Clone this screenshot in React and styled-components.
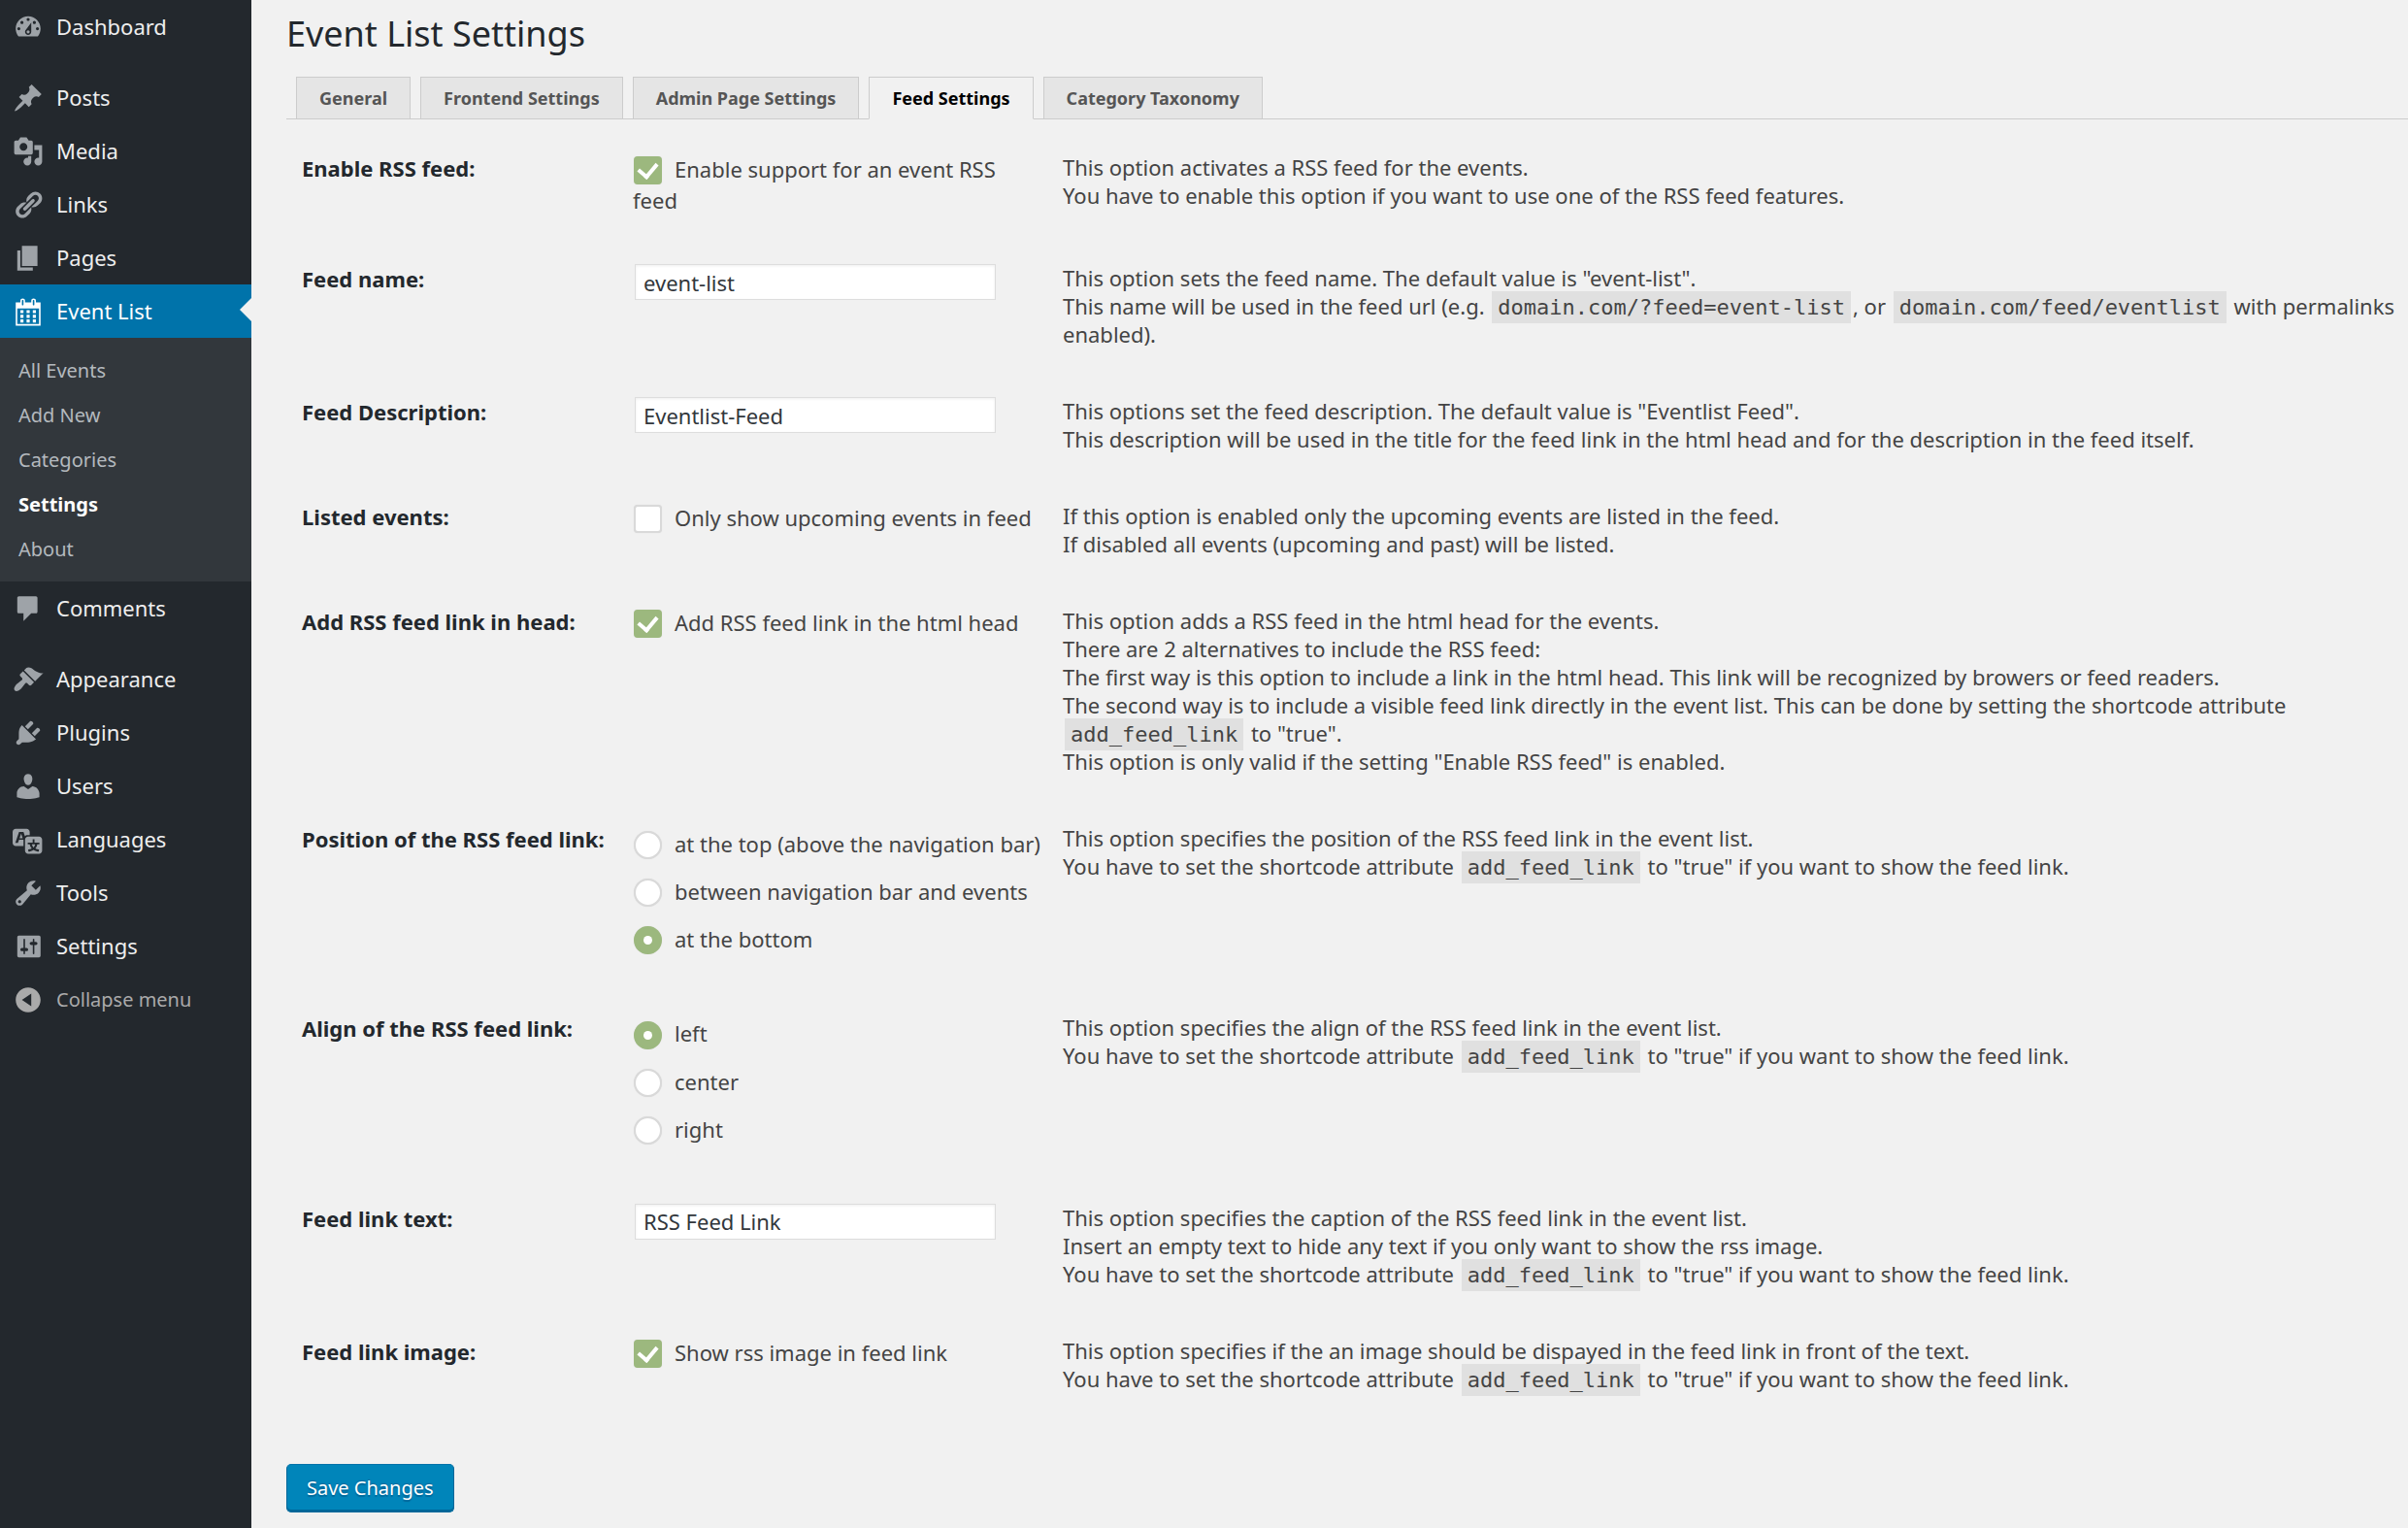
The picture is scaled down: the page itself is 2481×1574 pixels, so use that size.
import React, { useState } from 'react';
import styled, { createGlobalStyle, css } from 'styled-components';

const ICONS = {
  dashboard:
    'M3.76 16h12.48c1.1-1.37 1.76-3.11 1.76-5 0-4.42-3.58-8-8-8s-8 3.58-8 8c0 1.89.66 3.63 1.76 5zM10 4c.55 0 1 .45 1 1s-.45 1-1 1-1-.45-1-1 .45-1 1-1zM6 6c.55 0 1 .45 1 1s-.45 1-1 1-1-.45-1-1 .45-1 1-1zm8 0c.55 0 1 .45 1 1s-.45 1-1 1-1-.45-1-1 .45-1 1-1zm-5.37 5.55L12 7v6c0 1.1-.9 2-2 2s-2-.9-2-2c0-.57.24-1.08.63-1.45zM4 10c.55 0 1 .45 1 1s-.45 1-1 1-1-.45-1-1 .45-1 1-1zm12 0c.55 0 1 .45 1 1s-.45 1-1 1-1-.45-1-1 .45-1 1-1zm-5 3c0-.55-.45-1-1-1s-1 .45-1 1 .45 1 1 1 1-.45 1-1z',
  posts:
    'M10.44 3.02l1.82-1.82 6.36 6.35-1.83 1.82c-1.05-.68-2.48-.57-3.41.36l-.75.75c-.92.93-1.04 2.35-.35 3.41l-1.83 1.82-2.41-2.41-2.8 2.79c-.42.42-3.38 2.71-3.8 2.29s1.86-3.39 2.28-3.81l2.79-2.79L4.1 9.36l1.83-1.82c1.05.69 2.48.57 3.4-.36l.75-.75c.93-.92 1.05-2.35.36-3.41z',
  media:
    'M13 11V4c0-.55-.45-1-1-1h-1.67L9 1H5L3.67 3H2c-.55 0-1 .45-1 1v7c0 .55.45 1 1 1h10c.55 0 1-.45 1-1zM7 4.5c1.38 0 2.5 1.12 2.5 2.5S8.38 9.5 7 9.5 4.5 8.38 4.5 7 5.62 4.5 7 4.5zM14 6h5v10.5c0 1.38-1.12 2.5-2.5 2.5S14 17.88 14 16.5s1.12-2.5 2.5-2.5c.17 0 .34.02.5.05V9h-3V6zm-4 8.05V13h2v3.5c0 1.38-1.12 2.5-2.5 2.5S7 17.88 7 16.5 8.12 14 9.5 14c.17 0 .34.02.5.05z',
  links:
    'M17.74 2.76c1.68 1.69 1.68 4.41 0 6.1l-1.53 1.52c-1.12 1.12-2.7 1.47-4.14 1.09l2.62-2.61.76-.77.76-.76c.84-.84.84-2.2 0-3.04-.84-.85-2.2-.85-3.04 0l-.77.76-3.38 3.38c-.37-1.44-.02-3.02 1.1-4.14l1.52-1.53c1.69-1.68 4.42-1.68 6.1 0zM8.59 13.43l5.34-5.34c.42-.42.42-1.1 0-1.52-.44-.43-1.13-.39-1.53 0l-5.33 5.34c-.42.42-.42 1.1 0 1.52.44.43 1.13.39 1.52 0zm-.76 2.29l4.14-4.15c.38 1.44.03 3.02-1.09 4.14l-1.52 1.53c-1.69 1.68-4.41 1.68-6.1 0-1.68-1.68-1.68-4.42 0-6.1l1.53-1.52c1.12-1.12 2.7-1.47 4.14-1.1l-4.14 4.15c-.85.84-.85 2.2 0 3.05.84.84 2.2.84 3.04 0z',
  pages: 'M6 15V2h10v13H6zm-1 1h8v2H3V5h2v11z',
  calendar:
    'M15 4h3v15H2V4h3V3c0-.41.15-.76.44-1.06.29-.29.65-.44 1.06-.44s.77.15 1.06.44c.29.3.44.65.44 1.06v1h4V3c0-.41.15-.76.44-1.06.29-.29.65-.44 1.06-.44s.77.15 1.06.44c.29.3.44.65.44 1.06v1zM6 3v2.5c0 .14.05.26.15.36.09.09.21.14.35.14s.26-.05.35-.14c.1-.1.15-.22.15-.36V3c0-.14-.05-.26-.15-.35-.09-.1-.21-.15-.35-.15s-.26.05-.35.15c-.1.09-.15.21-.15.35zm7 0v2.5c0 .14.05.26.14.36.1.09.22.14.36.14s.26-.05.36-.14c.09-.1.14-.22.14-.36V3c0-.14-.05-.26-.14-.35-.1-.1-.22-.15-.36-.15s-.26.05-.36.15c-.09.09-.14.21-.14.35zm4 15V8H3v10h14zM7 9v2H5V9h2zm2 0h2v2H9V9zm4 2V9h2v2h-2zm-6 1v2H5v-2h2zm2 0h2v2H9v-2zm4 2v-2h2v2h-2zm-6 1v2H5v-2h2zm4 2H9v-2h2v2zm4 0h-2v-2h2v2z',
  comments:
    'M4 2h11c.55 0 1 .45 1 1v9c0 .55-.45 1-1 1h-3l-5 5v-5H4c-.55 0-1-.45-1-1V3c0-.55.45-1 1-1z',
  appearance:
    'M14.48 11.06L7.41 3.99l1.5-1.5c.5-.56 2.3-.47 3.51.32 1.21.8 1.43 1.28 2.91 2.1 1.18.64 2.45 1.26 4.45.85zm-.71.71L6.7 4.7 4.93 6.47c-.39.39-.39 1.02 0 1.41l1.06 1.06c.39.39.39 1.03 0 1.42-.6.6-1.43 1.11-2.21 1.69-.35.26-.7.53-1.01.84C1.43 14.23.4 16.08 1.4 17.07c.99 1 2.84-.03 4.18-1.36.31-.31.58-.66.85-1.02.57-.78 1.08-1.61 1.69-2.21.39-.39 1.02-.39 1.41 0l1.06 1.06c.39.39 1.02.39 1.41 0z',
  plugins:
    'M13.11 4.36L9.87 7.6 8 5.73l3.24-3.24c.35-.34 1.05-.2 1.56.32.52.51.66 1.21.31 1.55zm-8 1.77l.91-1.12 9.01 9.01-1.19.84c-.71.71-2.63 1.16-3.82 1.16H6.14L4.9 17.26c-.59.59-1.54.59-2.12 0-.59-.58-.59-1.53 0-2.12l1.24-1.24v-3.88c0-1.13.4-3.19 1.09-3.89zm7.26 3.97l3.24-3.24c.34-.35 1.04-.21 1.55.31.52.51.66 1.21.31 1.55l-3.24 3.25z',
  users:
    'M10 9.25c-2.27 0-2.73-3.44-2.73-3.44C7 4.02 7.82 2 9.97 2c2.16 0 2.98 2.02 2.71 3.81 0 0-.41 3.44-2.68 3.44zm0 2.57L12.72 10c2.39 0 4.52 2.33 4.52 4.53v2.49s-3.65 1.13-7.24 1.13c-3.65 0-7.24-1.13-7.24-1.13v-2.49c0-2.25 1.94-4.48 4.47-4.48z',
  languages:
    'M11 7H9.49c-.63 0-1.25.3-1.59.7L7 5H4.13l-2.39 7h1.69l.74-2H7v4H2c-1.1 0-2-.9-2-2V5c0-1.1.9-2 2-2h7c1.1 0 2 .9 2 2v2zM6.51 9H4.49l1-2.93zM10 8h7c1.1 0 2 .9 2 2v7c0 1.1-.9 2-2 2h-7c-1.1 0-2-.9-2-2v-7c0-1.1.9-2 2-2zm7.25 5v-1.08h-3.17V9.75h-1.16v2.17H9.75V13h1.28c.11.85.56 1.85 1.28 2.62-.87.36-1.89.62-2.31.62-.01.02.22.97.2 1.46.84 0 2.21-.5 3.28-1.15 1.09.65 2.48 1.15 3.34 1.15-.02-.49.2-1.44.2-1.46-.43 0-1.49-.27-2.38-.63.7-.77 1.14-1.77 1.25-2.61h1.36zm-3.81 1.93c-.5-.46-.85-1.13-1.01-1.93h2.09c-.17.8-.51 1.47-1 1.93l-.04.03s-.03-.02-.04-.03z',
  tools:
    'M16.68 9.77c-1.34 1.34-3.3 1.67-4.95.99l-5.41 6.52c-.99.99-2.59.99-3.58 0s-.99-2.59 0-3.57l6.52-5.42c-.68-1.65-.35-3.61.99-4.95 1.28-1.28 3.12-1.62 4.72-1.06l-2.89 2.89 2.82 2.82 2.86-2.87c.53 1.58.18 3.39-1.08 4.65zM3.81 16.21c.4.39 1.04.39 1.43 0 .4-.4.4-1.04 0-1.43-.39-.4-1.03-.4-1.43 0-.39.39-.39 1.03 0 1.43z',
  settings:
    'M18 16V4c0-.55-.45-1-1-1H4c-.55 0-1 .45-1 1v12c0 .55.45 1 1 1h13c.55 0 1-.45 1-1zM8 11h1c.55 0 1 .45 1 1s-.45 1-1 1H8v1.5c0 .28-.22.5-.5.5s-.5-.22-.5-.5V13H6c-.55 0-1-.45-1-1s.45-1 1-1h1V5.5c0-.28.22-.5.5-.5s.5.22.5.5V11zm5-2h-1c-.55 0-1-.45-1-1s.45-1 1-1h1V5.5c0-.28.22-.5.5-.5s.5.22.5.5V7h1c.55 0 1 .45 1 1s-.45 1-1 1h-1v5.5c0 .28-.22.5-.5.5s-.5-.22-.5-.5V9z',
  collapse:
    'M10 2c4.42 0 8 3.58 8 8s-3.58 8-8 8-8-3.58-8-8 3.58-8 8-8zm2 12V6l-6 4z',
};

const MENU = [
  { icon: 'dashboard', text: 'Dashboard' },
  { separator: true },
  { icon: 'posts', text: 'Posts' },
  { icon: 'media', text: 'Media' },
  { icon: 'links', text: 'Links' },
  { icon: 'pages', text: 'Pages' },
  {
    icon: 'calendar',
    text: 'Event List',
    current: true,
    submenu: ['All Events', 'Add New', 'Categories', 'Settings', 'About'],
  },
  { icon: 'comments', text: 'Comments' },
  { separator: true },
  { icon: 'appearance', text: 'Appearance' },
  { icon: 'plugins', text: 'Plugins' },
  { icon: 'users', text: 'Users' },
  { icon: 'languages', text: 'Languages' },
  { icon: 'tools', text: 'Tools' },
  { icon: 'settings', text: 'Settings' },
];

const TABS = [
  'General',
  'Frontend Settings',
  'Admin Page Settings',
  'Feed Settings',
  'Category Taxonomy',
];

const shortcodeHint = (
  <>
    You have to set the shortcode attribute <Code>add_feed_link</Code> to
    "true" if you want to show the feed link.
  </>
);

const OPTIONS = [
  {
    id: 'enable_feed',
    label: 'Enable RSS feed:',
    type: 'checkbox',
    caption: 'Enable support for an event RSS feed',
    value: true,
    lines: [
      'This option activates a RSS feed for the events.',
      'You have to enable this option if you want to use one of the RSS feed features.',
    ],
  },
  {
    id: 'feed_name',
    label: 'Feed name:',
    type: 'text',
    value: 'event-list',
    lines: [
      'This option sets the feed name. The default value is "event-list".',
      <>
        This name will be used in the feed url (e.g.{' '}
        <Code>domain.com/?feed=event-list</Code>, or{' '}
        <Code>domain.com/feed/eventlist</Code> with permalinks enabled).
      </>,
    ],
  },
  {
    id: 'feed_description',
    label: 'Feed Description:',
    type: 'text',
    value: 'Eventlist-Feed',
    lines: [
      'This options set the feed description. The default value is "Eventlist Feed".',
      'This description will be used in the title for the feed link in the html head and for the description in the feed itself.',
    ],
  },
  {
    id: 'feed_upcoming_only',
    label: 'Listed events:',
    type: 'checkbox',
    caption: 'Only show upcoming events in feed',
    value: false,
    lines: [
      'If this option is enabled only the upcoming events are listed in the feed.',
      'If disabled all events (upcoming and past) will be listed.',
    ],
  },
  {
    id: 'head_feed_link',
    label: 'Add RSS feed link in head:',
    type: 'checkbox',
    caption: 'Add RSS feed link in the html head',
    value: true,
    lines: [
      'This option adds a RSS feed in the html head for the events.',
      'There are 2 alternatives to include the RSS feed:',
      'The first way is this option to include a link in the html head. This link will be recognized by browers or feed readers.',
      <>
        The second way is to include a visible feed link directly in the event
        list. This can be done by setting the shortcode attribute{' '}
        <Code>add_feed_link</Code> to "true".
      </>,
      'This option is only valid if the setting "Enable RSS feed" is enabled.',
    ],
  },
  {
    id: 'feed_link_pos',
    label: 'Position of the RSS feed link:',
    type: 'radio',
    choices: [
      'at the top (above the navigation bar)',
      'between navigation bar and events',
      'at the bottom',
    ],
    value: 'at the bottom',
    lines: [
      'This option specifies the position of the RSS feed link in the event list.',
      shortcodeHint,
    ],
  },
  {
    id: 'feed_link_align',
    label: 'Align of the RSS feed link:',
    type: 'radio',
    choices: ['left', 'center', 'right'],
    value: 'left',
    lines: [
      'This option specifies the align of the RSS feed link in the event list.',
      shortcodeHint,
    ],
  },
  {
    id: 'feed_link_text',
    label: 'Feed link text:',
    type: 'text',
    value: 'RSS Feed Link',
    lines: [
      'This option specifies the caption of the RSS feed link in the event list.',
      'Insert an empty text to hide any text if you only want to show the rss image.',
      shortcodeHint,
    ],
  },
  {
    id: 'feed_link_img',
    label: 'Feed link image:',
    type: 'checkbox',
    caption: 'Show rss image in feed link',
    value: true,
    lines: [
      'This option specifies if the an image should be dispayed in the feed link in front of the text.',
      shortcodeHint,
    ],
  },
];

function Code({ children }) {
  return <StyledCode>{children}</StyledCode>;
}

const Icon = ({ name }) => (
  <StyledIcon viewBox="0 0 20 20" aria-hidden="true">
    <path fillRule="evenodd" d={ICONS[name]} />
  </StyledIcon>
);

const SideMenu = () => {
  return (
    <StyledSidebar>
      <StyledMenu>
        {MENU.map((item, idx) =>
          item.separator ? (
            <StyledSeparator key={idx} aria-hidden="true" />
          ) : (
            <li key={idx}>
              <StyledMenuLink href="#" $current={item.current}>
                <Icon name={item.icon} />
                {item.text}
              </StyledMenuLink>
              {item.submenu && (
                <StyledSubmenu>
                  {item.submenu.map(text => (
                    <li key={text}>
                      <StyledSubmenuLink href="#" $current={text === 'Settings'}>
                        {text}
                      </StyledSubmenuLink>
                    </li>
                  ))}
                </StyledSubmenu>
              )}
            </li>
          )
        )}
      </StyledMenu>
      <StyledCollapse type="button">
        <Icon name="collapse" />
        Collapse menu
      </StyledCollapse>
    </StyledSidebar>
  );
};

const OptionControl = ({ option, value, onChange }) => {
  if (option.type === 'text') {
    return (
      <StyledTextInput
        type="text"
        id={option.id}
        value={value}
        onChange={e => onChange(e.target.value)}
      />
    );
  }

  if (option.type === 'radio') {
    return (
      <StyledRadioGroup role="radiogroup" aria-labelledby={`${option.id}_label`}>
        {option.choices.map(choice => (
          <StyledChoice key={choice}>
            <StyledRadio
              type="radio"
              name={option.id}
              checked={value === choice}
              onChange={() => onChange(choice)}
            />
            {choice}
          </StyledChoice>
        ))}
      </StyledRadioGroup>
    );
  }

  return (
    <StyledChoice>
      <StyledCheckbox
        type="checkbox"
        id={option.id}
        checked={value}
        onChange={e => onChange(e.target.checked)}
      />
      {option.caption}
    </StyledChoice>
  );
};

const App = () => {
  const [values, setValues] = useState(
    Object.fromEntries(OPTIONS.map(option => [option.id, option.value]))
  );

  return (
    <>
      <GlobalStyle />
      <StyledPage>
        <SideMenu />
        <StyledMain>
          <StyledTitle>Event List Settings</StyledTitle>
          <StyledTabs>
            {TABS.map(tab => (
              <StyledTab key={tab} href="#" $active={tab === 'Feed Settings'}>
                {tab}
              </StyledTab>
            ))}
          </StyledTabs>
          <StyledForm onSubmit={e => e.preventDefault()}>
            {OPTIONS.map(option => (
              <StyledOption key={option.id}>
                <StyledLabel
                  as={option.type === 'radio' ? 'span' : 'label'}
                  id={`${option.id}_label`}
                  htmlFor={option.type === 'radio' ? undefined : option.id}
                >
                  {option.label}
                </StyledLabel>
                <StyledControl>
                  <OptionControl
                    option={option}
                    value={values[option.id]}
                    onChange={value =>
                      setValues(prev => ({ ...prev, [option.id]: value }))
                    }
                  />
                </StyledControl>
                <StyledDescription>
                  {option.lines.map((line, idx) => (
                    <div key={idx}>{line}</div>
                  ))}
                </StyledDescription>
              </StyledOption>
            ))}
            <StyledSave type="submit">Save Changes</StyledSave>
          </StyledForm>
        </StyledMain>
      </StyledPage>
    </>
  );
};

export default App;

const GlobalStyle = createGlobalStyle`
  * {
    box-sizing: border-box;
  }

  body {
    margin: 0;
    background: #f1f1f1;
    color: #444;
    font-family: 'Noto Sans', 'Open Sans', sans-serif;
    font-size: 22px;
    line-height: 29px;
  }
`;

const StyledPage = styled.div`
  display: flex;
  min-height: 100vh;
`;

const StyledSidebar = styled.nav`
  flex: none;
  width: 259px;
  background: #23282d;
`;

const StyledMenu = styled.ul`
  margin: 0;
  padding: 0;
  list-style: none;
`;

const StyledSeparator = styled.li`
  height: 18px;
`;

const StyledIcon = styled.svg`
  flex: none;
  width: 32px;
  height: 32px;
  fill: currentColor;
`;

const menuRow = css`
  display: flex;
  align-items: center;
  gap: 13px;
  width: 100%;
  height: 55px;
  padding: 0 13px;
`;

const StyledMenuLink = styled.a`
  ${menuRow}
  position: relative;
  background: ${({ $current }) => ($current ? '#0073aa' : 'transparent')};
  color: ${({ $current }) => ($current ? '#fff' : '#eee')};
  text-decoration: none;

  ${StyledIcon} {
    color: ${({ $current }) => ($current ? '#fff' : '#9ea3a8')};
  }

  ${({ $current }) =>
    $current &&
    css`
      &::after {
        content: '';
        position: absolute;
        right: 0;
        top: 14px;
        border: 12px solid transparent;
        border-left-width: 0;
        border-right-color: #f1f1f1;
      }
    `}
`;

const StyledSubmenu = styled.ul`
  margin: 0;
  padding: 11px 0 10px;
  background: #32373c;
  list-style: none;
`;

const StyledSubmenuLink = styled.a`
  display: block;
  padding: 0 19px;
  color: ${({ $current }) => ($current ? '#fff' : '#b4b9be')};
  font-size: 20px;
  font-weight: ${({ $current }) => ($current ? 700 : 400)};
  line-height: 46px;
  text-decoration: none;
`;

const StyledCollapse = styled.button`
  ${menuRow}
  border: 0;
  background: none;
  color: #aaa;
  font: inherit;
  font-size: 20px;
  cursor: pointer;
`;

const StyledMain = styled.main`
  flex: 1;
  min-width: 0;
  padding-left: 36px;
`;

const StyledTitle = styled.h1`
  margin: 0;
  padding: 11px 0 20px;
  color: #23282d;
  font-size: 36px;
  font-weight: 400;
  line-height: 48px;
`;

const StyledTabs = styled.div`
  display: flex;
  gap: 10px;
  padding-left: 10px;
  border-bottom: 1px solid #ccc;
`;

const StyledTab = styled.a`
  margin-bottom: -1px;
  padding: 7px 23px 6px;
  border: 1px solid #ccc;
  border-bottom-color: ${({ $active }) => ($active ? '#f1f1f1' : '#ccc')};
  background: ${({ $active }) => ($active ? '#f1f1f1' : '#e5e5e5')};
  color: ${({ $active }) => ($active ? '#000' : '#555')};
  font-size: 18px;
  font-weight: 700;
  text-decoration: none;
`;

const StyledForm = styled.form`
  padding-top: 10px;
`;

const StyledOption = styled.div`
  display: grid;
  grid-template-columns: 325px 427px 1fr;
  column-gap: 16px;
  padding: 25px 0 25px 16px;
`;

const StyledLabel = styled.label`
  color: #23282d;
  font-weight: 700;
  line-height: 31px;
`;

const StyledControl = styled.div`
  padding-right: 8px;
`;

const StyledDescription = styled.div`
  min-width: 0;
`;

const StyledCode = styled.code`
  margin: 0 2px;
  padding: 4px 6px;
  background: #e0e0e0;
  font-family: 'DejaVu Sans Mono', monospace;
  font-size: 22px;
  line-height: 1;
`;

const StyledTextInput = styled.input`
  display: block;
  width: 372px;
  height: 37px;
  margin-left: 2px;
  padding: 0 8px;
  border: 1px solid #ddd;
  background: #fff;
  box-shadow: inset 0 1px 3px rgba(0, 0, 0, 0.07);
  color: #32373c;
  font: inherit;
`;

const StyledChoice = styled.label`
  display: block;
  line-height: 32px;
`;

const StyledRadioGroup = styled.div`
  display: flex;
  flex-direction: column;
  gap: 17px;
  padding: 4px 0 11px;
  white-space: nowrap;
`;

const tick = css`
  appearance: none;
  display: inline-grid;
  place-items: center;
  width: 29px;
  height: 29px;
  margin: -3px 13px 0 1px;
  border: 2px solid #d9d9d9;
  background: #fff;
  box-shadow: 0 0 1px #d9d9d9;
  vertical-align: middle;

  &:checked {
    border-color: #9cb87e;
    background: #9cb87e;
  }
`;

const StyledCheckbox = styled.input`
  ${tick}
  border-radius: 4px;

  &:checked::before {
    content: '';
    width: 9px;
    height: 15px;
    margin-top: -4px;
    border: solid #fff;
    border-width: 0 4px 4px 0;
    transform: rotate(40deg);
  }
`;

const StyledRadio = styled.input`
  ${tick}
  border-radius: 50%;

  &:checked::before {
    content: '';
    width: 9px;
    height: 9px;
    border-radius: 50%;
    background: #fff;
  }
`;

const StyledSave = styled.button`
  display: block;
  height: 50px;
  margin-top: 48px;
  padding: 0 20px;
  border: 1px solid #006799;
  border-top-color: #0073aa;
  border-radius: 5px;
  background: #0085ba;
  box-shadow: inset 0 -2px 0 #006799;
  color: #fff;
  font: inherit;
  font-size: 20px;
  text-shadow: 0 -1px 1px #006799, 0 2px 1px #006799;
  cursor: pointer;
`;
